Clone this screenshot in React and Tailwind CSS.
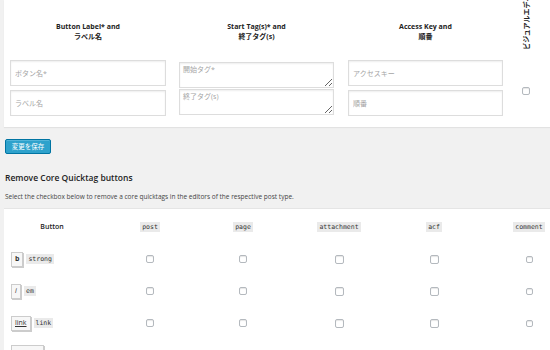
import React from "react";

const font = "font-['Open_Sans','Noto_Sans_CJK_JP',sans-serif]";

function TextInput({ placeholder }) {
  return (
    <input
      type="text"
      placeholder={placeholder}
      className="h-[26px] w-full border border-[#dddddd] bg-white px-[4px] text-[7px] text-[#333] shadow-[inset_0_1px_2px_rgba(0,0,0,0.07)] outline-none placeholder:text-[#a5a5a5]"
    />
  );
}

function TextArea({ placeholder }) {
  return (
    <textarea
      placeholder={placeholder}
      className="h-[26px] w-full border border-[#dddddd] bg-white px-[3px] py-[2px] text-[7px] leading-[9px] text-[#333] shadow-[inset_0_1px_2px_rgba(0,0,0,0.07)] outline-none placeholder:text-[#a5a5a5]"
    />
  );
}

function Check({ size = "w-[8px] h-[8px]" }) {
  return (
    <span
      className={`${size} inline-block rounded-[2px] border border-[#b4b9be] bg-white shadow-[inset_0_1px_1px_rgba(0,0,0,0.1)]`}
    ></span>
  );
}

function Code({ children }) {
  return (
    <code className="bg-[#eaeaea] px-[2px] py-[1px] font-['DejaVu_Sans_Mono',monospace] text-[6.5px] leading-[8px] text-[#333]">
      {children}
    </code>
  );
}

function QtButton({ children, className = "" }) {
  return (
    <span
      className={`inline-flex h-[15px] items-center justify-center border border-[#cccccc] bg-[#f7f7f7] px-[3px] text-[7px] text-[#333] shadow-[1px_1px_0_#cccccc] ${className}`}
    >
      {children}
    </span>
  );
}

const rows = [
  { btn: <QtButton className="font-bold min-w-[11px]">b</QtButton>, tag: "strong" },
  { btn: <QtButton className="italic min-w-[10px]">i</QtButton>, tag: "em" },
  { btn: <QtButton className="underline">link</QtButton>, tag: "link" },
];

const cols = "grid grid-cols-[96px_100px_86px_106px_84px_106px]";

export default function App() {
  return (
    <div className={`h-[350px] w-[550px] overflow-hidden bg-[#f1f1f1] pl-[4px] ${font}`}>
      {/* custom quicktag form */}
      <div className="flex h-[127px] overflow-hidden bg-white pl-[6px] shadow-[0_1px_1px_rgba(0,0,0,0.06)]">
        <div className="flex w-[156px] flex-col">
          <div className="h-[60px] pt-[22px] text-center text-[7px] font-bold leading-[10px] text-[#222]">
            Button Label* and
            <br />
            ラベル名
          </div>
          <div className="flex flex-col gap-[4px]">
            <TextInput placeholder="ボタン名*" />
            <TextInput placeholder="ラベル名" />
          </div>
        </div>
        <div className="ml-[13px] flex w-[155px] flex-col">
          <div className="h-[62px] pt-[22px] text-center text-[7px] font-bold leading-[10px] text-[#222]">
            Start Tag(s)* and
            <br />
            終了タグ(s)
          </div>
          <div className="flex flex-col gap-[1px]">
            <TextArea placeholder="開始タグ*" />
            <TextArea placeholder="終了タグ(s)" />
          </div>
        </div>
        <div className="ml-[14px] flex w-[155px] flex-col">
          <div className="h-[60px] pt-[22px] text-center text-[7px] font-bold leading-[10px] text-[#222]">
            Access Key and
            <br />
            順番
          </div>
          <div className="flex flex-col gap-[4px]">
            <TextInput placeholder="アクセスキー" />
            <TextInput placeholder="順番" />
          </div>
        </div>
        <div className="ml-[18px] flex w-[10px] flex-col items-center">
          <div className="flex h-[50px] flex-col items-center justify-end">
            <span className="rotate-180 whitespace-nowrap text-[7px] font-bold leading-[9px] text-[#222] [text-orientation:sideways] [writing-mode:vertical-rl]">
              ビジュアルエディタ
            </span>
          </div>
          <div className="mt-[37px] flex">
            <Check />
          </div>
        </div>
      </div>

      {/* save */}
      <div className="pl-[1px] pt-[12px]">
        <button className="flex h-[15px] w-[46px] items-center justify-center rounded-[2px] border border-[#0074a2] bg-[#2ea2cc] text-[6.5px] text-white shadow-[inset_0_1px_0_rgba(120,200,230,0.5)]">
          変更を保存
        </button>
      </div>

      <h2 className="pl-[1px] pt-[18px] text-[8.5px] font-semibold leading-[12px] text-[#222]">
        Remove Core Quicktag buttons
      </h2>
      <p className="pl-[1px] pt-[8px] text-[6.5px] leading-[9px] text-[#444]">
        Select the checkbox below to remove a core quicktags in the editors of the respective post type.
      </p>

      {/* core quicktags table */}
      <div className="mt-[7px] h-[200px] overflow-hidden border-t border-[#e5e5e5] bg-white">
        <div className={`${cols} h-[34px] items-center pt-[2px] text-[7px] text-[#222]`}>
          <div className="text-center font-semibold">Button</div>
          <div className="text-center"><Code>post</Code></div>
          <div className="text-center"><Code>page</Code></div>
          <div className="text-center"><Code>attachment</Code></div>
          <div className="text-center"><Code>acf</Code></div>
          <div className="text-center"><Code>comment</Code></div>
        </div>
        {rows.map((r) => (
          <div key={r.tag} className={`${cols} h-[32px] items-center`}>
            <div className="flex items-center gap-[3px] pl-[7px]">
              {r.btn}
              <Code>{r.tag}</Code>
            </div>
            <div className="flex justify-center"><Check /></div>
            <div className="flex justify-center"><Check /></div>
            <div className="flex justify-center"><Check size="w-[9px] h-[9px]" /></div>
            <div className="flex justify-center"><Check size="w-[9px] h-[9px]" /></div>
            <div className="flex justify-center"><Check size="w-[7px] h-[7px]" /></div>
          </div>
        ))}
        <div className={`${cols} h-[32px] items-start pt-[6px]`}>
          <div className="pl-[7px]">
            <span className="block h-[16px] w-[33px] border border-[#cccccc] bg-[#f7f7f7] shadow-[1px_1px_0_#cccccc]"></span>
          </div>
        </div>
      </div>
    </div>
  );
}
